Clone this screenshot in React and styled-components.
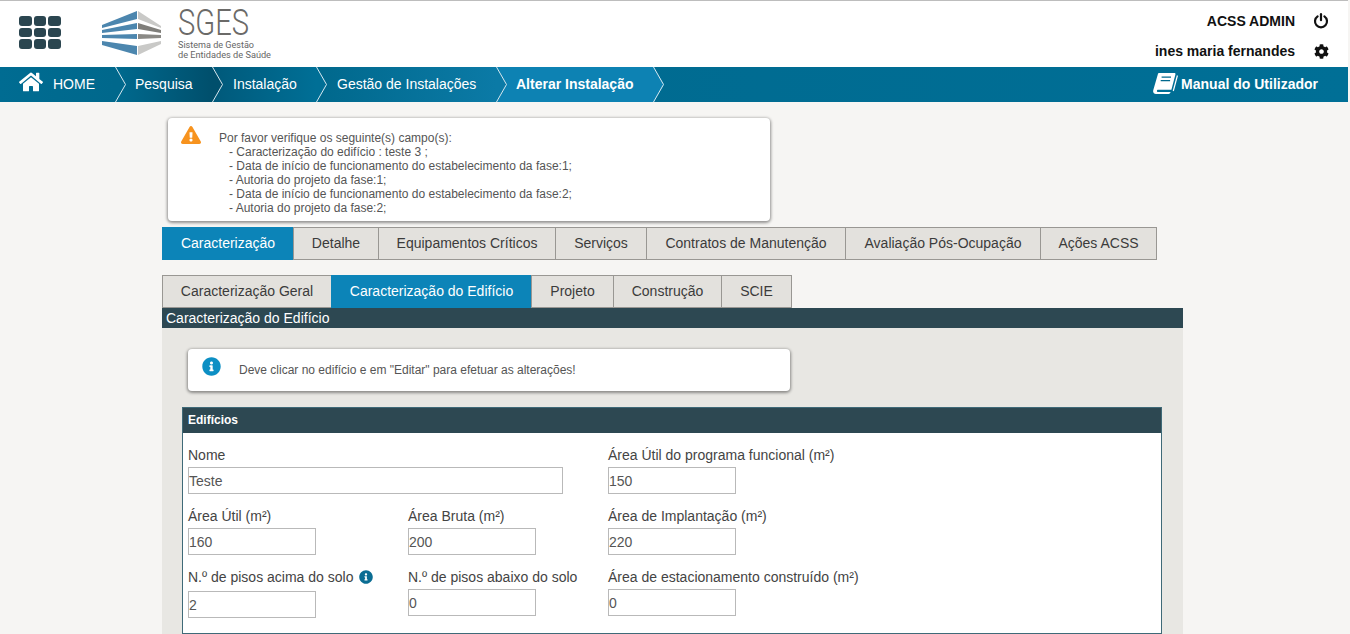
import styled, { createGlobalStyle } from "styled-components"
import { FaHome, FaCog, FaInfoCircle, FaExclamationTriangle } from "react-icons/fa"

const GlobalStyle = createGlobalStyle`
html, body {
  margin: 0;
  height: 634px;
  overflow: hidden;
  background: #f6f5f3;
  font-family: "Liberation Sans", Arial, sans-serif;
  color: #444;
}
* { box-sizing: border-box; }
`

const Header = styled.header`
  height: 67px;
  width: 1348px;
  background: #fff;
  border-top: 1px solid #bdbdbd;
  display: flex;
  align-items: flex-start;
`

const Launcher = styled.div`
  margin: 15px 0 0 19px;
  width: 42px;
  height: 33px;
  display: grid;
  grid-template-columns: repeat(3, 1fr);
  grid-template-rows: repeat(3, 1fr);
  gap: 2px;
`

const LauncherDot = styled.span`
  background: #2b4650;
  border-radius: 3px;
`

const LogoWrap = styled.div`
  margin-left: 40px;
  display: flex;
`

const UserArea = styled.div`
  margin-left: auto;
  padding: 11px 19px 0 0;
  display: grid;
  grid-template-columns: auto 26px;
  row-gap: 12px;
  column-gap: 8px;
  justify-items: end;
  align-items: center;
`

const UserName = styled.span`
  font-size: 14px;
  line-height: 18px;
  font-weight: bold;
  color: #111;
`

const UserIcon = styled.span`
  display: flex;
  justify-content: flex-end;
  color: #111;
`

const Nav = styled.nav`
  height: 35px;
  width: 1348px;
  background: linear-gradient(90deg, #00688d 0, #006f96 100%);
  display: flex;
  align-items: stretch;
`

const Crumb = styled.div`
  position: relative;
  width: ${(p) => p.$width}px;
  padding: 0 0 2px ${(p) => p.$pad}px;
  display: flex;
  align-items: center;
  font-size: 14px;
  font-weight: ${(p) => (p.$active ? "bold" : "normal")};
  color: #fff;
  background: ${(p) => p.$bg};
`

const CrumbTip = styled.svg`
  position: absolute;
  left: 100%;
  top: 0;
  width: 11px;
  height: 35px;
  z-index: 1;
`

const HomeMark = styled(FaHome).attrs({ size: 24 })`
  position: absolute;
  left: 19px;
  top: 3px;
`

const ManualLink = styled.div`
  margin-left: auto;
  padding: 0 30px 2px 0;
  display: flex;
  align-items: center;
  gap: 3px;
  font-size: 14px;
  font-weight: bold;
  color: #fff;
`

const Content = styled.main`
  width: 1021px;
  margin-left: 162px;
  padding-top: 16px;
`

const Notice = styled.div`
  background: #fff;
  border-radius: 4px;
  box-shadow: 0 1px 3px 1px rgba(0, 0, 0, 0.4);
  display: flex;
  width: ${(p) => p.$width}px;
  margin-left: ${(p) => p.$left}px;
  font-size: 12px;
  color: #555;
`

const WarningBody = styled.div`
  padding: 13px 0 6px 18px;
  line-height: 14px;
`

const WarningLine = styled.div`
  padding-left: 10px;
`

const InfoBody = styled.div`
  padding: 0 0 0 18px;
  line-height: 42px;
  font-size: 12px;
`

const NoticeIcon = styled.span`
  display: flex;
  padding: ${(p) => p.$pad};
  height: max-content;
  color: ${(p) => p.$color};
`

const TabRow = styled.div`
  display: flex;
  margin-top: ${(p) => p.$top}px;
`

const Tab = styled.div`
  height: 33px;
  width: ${(p) => p.$width}px;
  margin-left: -1px;
  padding-bottom: 2px;
  &:first-child { margin-left: 0; }
  display: flex;
  align-items: center;
  justify-content: center;
  font-size: 14px;
  border: 1px solid ${(p) => (p.$active ? "#0c84b8" : "#999793")};
  background: ${(p) => (p.$active ? "#0c84b8" : "#e3e1dd")};
  color: ${(p) => (p.$active ? "#fff" : "#3b3b3b")};
`

const SectionTitle = styled.div`
  height: 20px;
  padding-left: 4px;
  background: #2d4852;
  color: #fff;
  font-size: 14px;
  line-height: 20px;
`

const SectionBody = styled.section`
  background: #e8e7e3;
  padding: 21px 21px 0 20px;
  height: 306px;
`

const Panel = styled.div`
  margin-top: 16px;
  background: #fff;
  border: 1px solid #3f6a78;
  height: 227px;
`

const PanelHead = styled.div`
  height: 25px;
  padding-left: 5px;
  background: #2d4852;
  color: #fff;
  font-size: 12px;
  font-weight: bold;
  line-height: 25px;
`

const PanelForm = styled.div`
  padding: 12px 0 0 5px;
`

const FormRow = styled.div`
  display: flex;
  margin-bottom: 12px;
`

const Field = styled.div`
  width: ${(p) => p.$width}px;
  flex: none;
`

const FieldLabel = styled.div`
  display: flex;
  align-items: center;
  gap: 6px;
  height: ${(p) => (p.$tall ? 24 : 22)}px;
  font-size: 14px;
  color: #444;
  padding-bottom: ${(p) => (p.$tall ? 4 : 2)}px;
`

const TextInput = styled.input`
  display: block;
  width: ${(p) => p.$width || 128}px;
  height: 27px;
  padding: 0;
  border: 1px solid #b9b9b9;
  background: #fff;
  font: 14px "Liberation Sans", Arial, sans-serif;
  color: #555;
  outline: none;
`

const Logo = () => (
  <svg width="172" height="63" viewBox="0 -7 172 63">
    <polygon points="1,17 36,3 36,11 1,20" fill="#4c86ae" />
    <polygon points="1,22 36,15 36,21 1,25" fill="#4c86ae" />
    <polygon points="1,27 36,26 36,31 1,30" fill="#4c86ae" />
    <polygon points="1,33 36,38 36,47 1,37" fill="#4c86ae" />
    <polygon points="37,3 60,18 60,20 37,11" fill="#c9c9c7" />
    <polygon points="37,15 60,22 60,25 37,21" fill="#7f7e7a" />
    <polygon points="37,26 60,27 60,30 37,31" fill="#8a8985" />
    <polygon points="37,38 60,33 60,36 37,47" fill="#c9c9c7" />
    <text x="77" y="27" fontFamily="Roboto, sans-serif" fontWeight="300" fontSize="36" fill="#6b6a68" textLength="71" lengthAdjust="spacingAndGlyphs">SGES</text>
    <text x="77" y="40" fontFamily="Roboto, sans-serif" fontSize="9.2" fill="#666" textLength="76" lengthAdjust="spacingAndGlyphs">Sistema de Gestão</text>
    <text x="77" y="50" fontFamily="Roboto, sans-serif" fontSize="9.2" fill="#666" textLength="93" lengthAdjust="spacingAndGlyphs">de Entidades de Saúde</text>
  </svg>
)

const PowerIcon = () => (
  <svg width="16" height="16" viewBox="0 0 16 16" fill="none" stroke="#111" strokeWidth="2.2" strokeLinecap="round">
    <path d="M4.6 3.4a6 6 0 1 0 6.8 0" />
    <path d="M8 1.2v6" />
  </svg>
)

const BookIcon = () => (
  <svg width="25" height="21" viewBox="0 0 25 21">
    <path d="M6 0h15.4c.9 0 1.2.6 1 1.5L18.4 16.8H5.2c-1.6 0-1.7 2.2-.2 2.2h12.6l-.2.6c-.2.8-.8 1.4-1.8 1.4H3c-2.2 0-3.4-1.6-2.7-3.9L4.8 1.4C5 .6 5.4 0 6 0z" fill="#fff" />
    <path d="M8.6 4.2h9.4M7.7 7.6h9.4" stroke="#00688d" strokeWidth="1.3" />
    <path d="M24.4 2.5 20.3 18" stroke="#fff" strokeWidth="1.2" fill="none" />
  </svg>
)

const crumbs = [
  { label: "HOME", width: 115, pad: 53, bg: "linear-gradient(90deg, #006c92, #00688c)", fill: "#00688c", home: true },
  { label: "Pesquisa", width: 97, pad: 20, bg: "linear-gradient(90deg, #006a8f, #004f6c)", fill: "#004f6c" },
  { label: "Instalação", width: 104, pad: 21, bg: "linear-gradient(90deg, #00597a, #006f96)", fill: "#006f96" },
  { label: "Gestão de Instalações", width: 180, pad: 21, bg: "linear-gradient(90deg, #00688c, #0b7aa6)", fill: "#0b7aa6" },
  { label: "Alterar Instalação", width: 157, pad: 20, bg: "#0d82b3", fill: "#0d82b3", active: true },
]

const mainTabs = [
  ["Caracterização", 132, true],
  ["Detalhe", 86],
  ["Equipamentos Críticos", 178],
  ["Serviços", 92],
  ["Contratos de Manutenção", 200],
  ["Avaliação Pós-Ocupação", 196],
  ["Ações ACSS", 117],
]

const subTabs = [
  ["Caracterização Geral", 170],
  ["Caracterização do Edifício", 201, true],
  ["Projeto", 83],
  ["Construção", 109],
  ["SCIE", 71],
]

const warnings = [
  "Caracterização do edifício : teste 3 ;",
  "Data de início de funcionamento do estabelecimento da fase:1;",
  "Autoria do projeto da fase:1;",
  "Data de início de funcionamento do estabelecimento da fase:2;",
  "Autoria do projeto da fase:2;",
]

const launcherDots = Array.from({ length: 9 })

const App = () => {
  return (
    <>
      <GlobalStyle />
      <Header>
        <Launcher>
          {launcherDots.map((_, i) => <LauncherDot key={i} />)}
        </Launcher>
        <LogoWrap><Logo /></LogoWrap>
        <UserArea>
          <UserName>ACSS ADMIN</UserName>
          <UserIcon><PowerIcon /></UserIcon>
          <UserName>ines maria fernandes</UserName>
          <UserIcon><FaCog size={15} /></UserIcon>
        </UserArea>
      </Header>

      <Nav>
        {crumbs.map((c) => (
          <Crumb key={c.label} $width={c.width} $pad={c.pad} $bg={c.bg} $active={c.active}>
            {c.home && <HomeMark />}
            {c.label}
            <CrumbTip viewBox="0 0 11 35">
              <polygon points="0,0 1,0 11,17.5 1,35 0,35" fill={c.fill} />
              <polyline points="0.5,0 10.5,17.5 0.5,35" fill="none" stroke="#d7e8ef" strokeWidth="1" />
            </CrumbTip>
          </Crumb>
        ))}
        <ManualLink><BookIcon />Manual do Utilizador</ManualLink>
      </Nav>

      <Content>
        <Notice $width={602} $left={6}>
          <NoticeIcon $pad="7px 0 0 13px" $color="#f7931e"><FaExclamationTriangle size={20} /></NoticeIcon>
          <WarningBody>
            Por favor verifique os seguinte(s) campo(s):
            {warnings.map((w) => <WarningLine key={w}>- {w}</WarningLine>)}
          </WarningBody>
        </Notice>

        <TabRow $top={6}>
          {mainTabs.map(([label, width, active]) => (
            <Tab key={label} $width={width} $active={active}>{label}</Tab>
          ))}
        </TabRow>
        <TabRow $top={15}>
          {subTabs.map(([label, width, active]) => (
            <Tab key={label} $width={width} $active={active}>{label}</Tab>
          ))}
        </TabRow>

        <SectionTitle>Caracterização do Edifício</SectionTitle>
        <SectionBody>
          <Notice $width={602} $left={6}>
            <NoticeIcon $pad="8px 0 0 14px" $color="#0c8fc4"><FaInfoCircle size={19} /></NoticeIcon>
            <InfoBody>Deve clicar no edifício e em "Editar" para efetuar as alterações!</InfoBody>
          </Notice>

          <Panel>
            <PanelHead>Edifícios</PanelHead>
            <PanelForm>
              <FormRow>
                <Field $width={420}>
                  <FieldLabel>Nome</FieldLabel>
                  <TextInput $width={375} defaultValue="Teste" />
                </Field>
                <Field $width={300}>
                  <FieldLabel>Área Útil do programa funcional (m²)</FieldLabel>
                  <TextInput defaultValue="150" />
                </Field>
              </FormRow>
              <FormRow>
                <Field $width={220}>
                  <FieldLabel>Área Útil (m²)</FieldLabel>
                  <TextInput defaultValue="160" />
                </Field>
                <Field $width={200}>
                  <FieldLabel>Área Bruta (m²)</FieldLabel>
                  <TextInput defaultValue="200" />
                </Field>
                <Field $width={300}>
                  <FieldLabel>Área de Implantação (m²)</FieldLabel>
                  <TextInput defaultValue="220" />
                </Field>
              </FormRow>
              <FormRow>
                <Field $width={220}>
                  <FieldLabel $tall>N.º de pisos acima do solo <FaInfoCircle size={14} color="#0b6d93" /></FieldLabel>
                  <TextInput defaultValue="2" />
                </Field>
                <Field $width={200}>
                  <FieldLabel>N.º de pisos abaixo do solo</FieldLabel>
                  <TextInput defaultValue="0" />
                </Field>
                <Field $width={300}>
                  <FieldLabel>Área de estacionamento construído (m²)</FieldLabel>
                  <TextInput defaultValue="0" />
                </Field>
              </FormRow>
            </PanelForm>
          </Panel>
        </SectionBody>
      </Content>
    </>
  );
}

export default App;
